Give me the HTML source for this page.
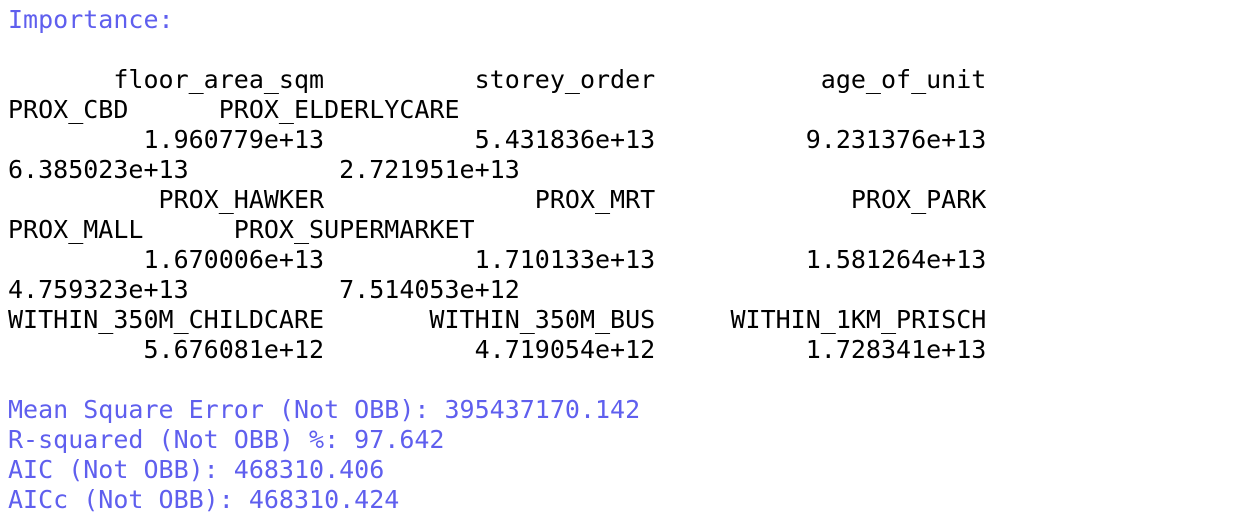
<!DOCTYPE html>
<html><head><meta charset="utf-8"><style>
html,body{margin:0;padding:0;background:#fff;width:1239px;height:522px;overflow:hidden}
pre{margin:0;position:absolute;left:8px;top:5px;font-family:"DejaVu Sans Mono","Liberation Mono",monospace;font-size:25px;line-height:30px;color:#000}
.b{color:#5f5fee}
</style></head><body>
<pre><span class="b">Importance:</span>

       floor_area_sqm          storey_order           age_of_unit
PROX_CBD      PROX_ELDERLYCARE
         1.960779e+13          5.431836e+13          9.231376e+13
6.385023e+13          2.721951e+13
          PROX_HAWKER              PROX_MRT             PROX_PARK
PROX_MALL      PROX_SUPERMARKET
         1.670006e+13          1.710133e+13          1.581264e+13
4.759323e+13          7.514053e+12
WITHIN_350M_CHILDCARE       WITHIN_350M_BUS     WITHIN_1KM_PRISCH
         5.676081e+12          4.719054e+12          1.728341e+13

<span class="b">Mean Square Error (Not OBB): 395437170.142
R-squared (Not OBB) %: 97.642
AIC (Not OBB): 468310.406
AICc (Not OBB): 468310.424</span></pre>
</body></html>
